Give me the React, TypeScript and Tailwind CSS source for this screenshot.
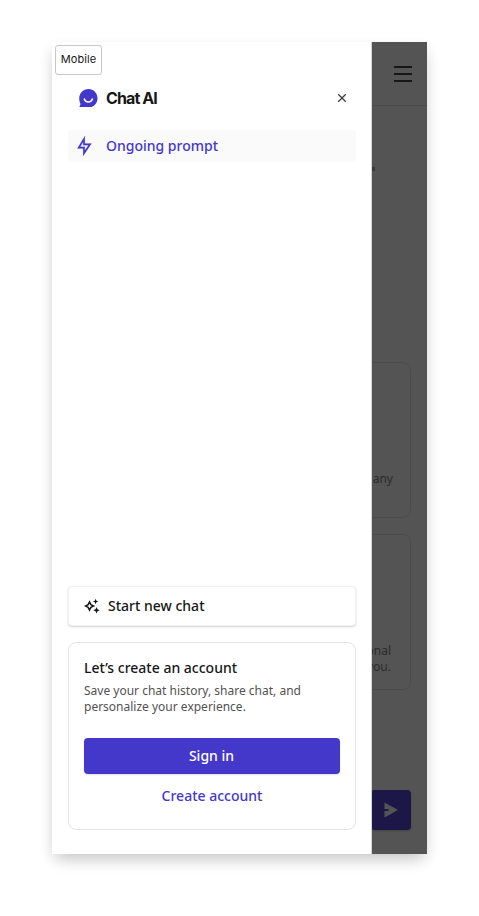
import React from "react";
import { RiFlashlightLine, RiCloseLine } from "react-icons/ri";

function Logo() {
  return (
    <svg viewBox="0 0 18 18" className="ml-px h-[18.500px] w-[18.500px]" fill="none">
      <path d="M9.2 0C14.1 0 18 4 18 9s-3.900 9-8.800 9H0.200L1.500 14.600C.700 13.100.2 11.100.2 9 .2 4 4.300 0 9.200 0Z" fill="#4338ca" />
      <path d="M5 9.300C5.700 11.700 7.200 12.700 9.100 12.700s3.400-1 4.100-3.400" stroke="white" strokeWidth="1.500" />
    </svg>
  );
}

function Sparkles() {
  return (
    <svg viewBox="0 0 16 16" className="size-4" fill="#171717">
      <path d="M5.500 3.900 6.900 6.600 9.600 8 6.900 9.400 5.500 12.100 4.100 9.400 1.400 8 4.100 6.600Z" fill="none" stroke="#171717" strokeWidth="1.500" />
      <path d="m11.600.8.8 1.900 1.900.8-1.900.8-.8 1.900-.8-1.900-1.900-.8 1.900-.8Z" />
      <path d="m12.500 9.100 1 2.200 2.200 1-2.200 1-1 2.200-1-2.200-2.200-1 2.200-1Z" />
    </svg>
  );
}

function Drawer() {
  return (
    <aside className="flex w-80 shrink-0 flex-col border-r border-[#d4d4d4] bg-white pl-4 pr-[15px]">
      <div className="-ml-[13px] mt-[3px] flex h-[30px] w-[47px] items-center justify-center rounded-[3px] border border-[#c8c8c8] bg-white pb-[2px] font-['Inter',sans-serif] text-[11px] tracking-[0.1px] text-[#171717]">
        Mobile
      </div>
      <header className="mt-[7px] flex h-8 items-center pl-2.5 pr-2">
        <Logo />
        <span className="ml-[8.500px] font-['Inter',sans-serif] text-base font-bold tracking-[-0.9px] text-[#171717]">Chat AI</span>
        <RiCloseLine className="ml-auto size-4 -mr-[2px] text-[#404040]" />
      </header>
      <nav className="mt-4">
        <a className="flex h-8 items-center rounded bg-[#fafafa] pl-1.5 text-sm font-medium text-[#4338ca]">
          <RiFlashlightLine className="size-5 stroke-current stroke-[0.2px]" />
          <span className="ml-3">Ongoing prompt</span>
        </a>
      </nav>
      <button className="mt-auto flex h-10 shrink-0 items-center rounded border border-[#f0f0f0] bg-white pl-[15px] text-sm font-medium text-[#171717] shadow-[0_1px_2px_rgba(0,0,0,0.18)]">
        <Sparkles />
        <span className="ml-2">Start new chat</span>
      </button>
      <section className="mb-6 mt-4 flex h-[188px] shrink-0 flex-col rounded-lg border border-[#e5e5e5] px-[15px] pt-[15px]">
        <h2 className="text-sm font-medium leading-5 text-[#171717]">Let’s create an account</h2>
        <p className="mt-[5px] text-xs leading-4 text-[#525252]">
          Save your chat history, share chat, and
          <br />
          personalize your experience.
        </p>
        <button className="mt-[23px] h-9 shrink-0 rounded bg-[#4338ca] pr-px text-sm font-medium text-white shadow-[0_1px_2px_rgba(0,0,0,0.12)]">Sign in</button>
        <button className="mt-1 h-9 shrink-0 text-sm font-medium text-[#4338ca]">Create account</button>
      </section>
    </aside>
  );
}

function DimmedPage() {
  return (
    <main className="flex min-w-0 flex-1 flex-col overflow-hidden bg-[#545454] text-xs leading-4 text-[#2b2b2b]">
      <header className="flex h-16 shrink-0 justify-end border-b border-[#4b4b4b] pr-[15px] pt-6">
        <div className="flex w-[18px] flex-col gap-[5px]">
          <i className="h-0.5 bg-[#171717]" />
          <i className="h-0.5 bg-[#171717]" />
          <i className="h-0.5 bg-[#171717]" />
        </div>
      </header>
      <div className="mt-[61px] h-1 w-[3px] bg-[#3a3a3a]" />
      <div className="-ml-2 mr-4 mt-[191px] flex h-[156px] shrink-0 flex-col items-end rounded-lg border border-[#4b4b4b] pr-[17px] pt-[108px]">
        <span>any</span>
      </div>
      <div className="-ml-2 mr-4 mt-4 flex h-[156px] shrink-0 flex-col items-end rounded-lg border border-[#4b4b4b] pr-[19px] pt-[108px] text-right">
        <span className="whitespace-nowrap">onal</span>
        <span className="whitespace-nowrap">you.</span>
      </div>
      <div className="-ml-px mt-[100px] flex h-10 w-10 shrink-0 items-center justify-center rounded bg-[#1c1746] shadow-[0_1px_2px_rgba(0,0,0,0.2)]">
        <svg viewBox="0 0 14 16" className="h-4 w-3.5" fill="#545454">
          <path d="M0.500 .500 14 8 0.500 15.500V9h4V7h-4Z" />
        </svg>
      </div>
    </main>
  );
}

export default function App() {
  return (
    <div className="h-[916px] w-[479px] overflow-hidden bg-white pl-[52px] pt-[42px] font-['Noto_Sans',sans-serif]">
      <div className="flex h-[812px] w-[375px] shadow-[0_8px_16px_-4px_rgba(0,0,0,0.2),0_5px_14px_rgba(0,0,0,0.06)]">
        <Drawer />
        <DimmedPage />
      </div>
    </div>
  );
}
